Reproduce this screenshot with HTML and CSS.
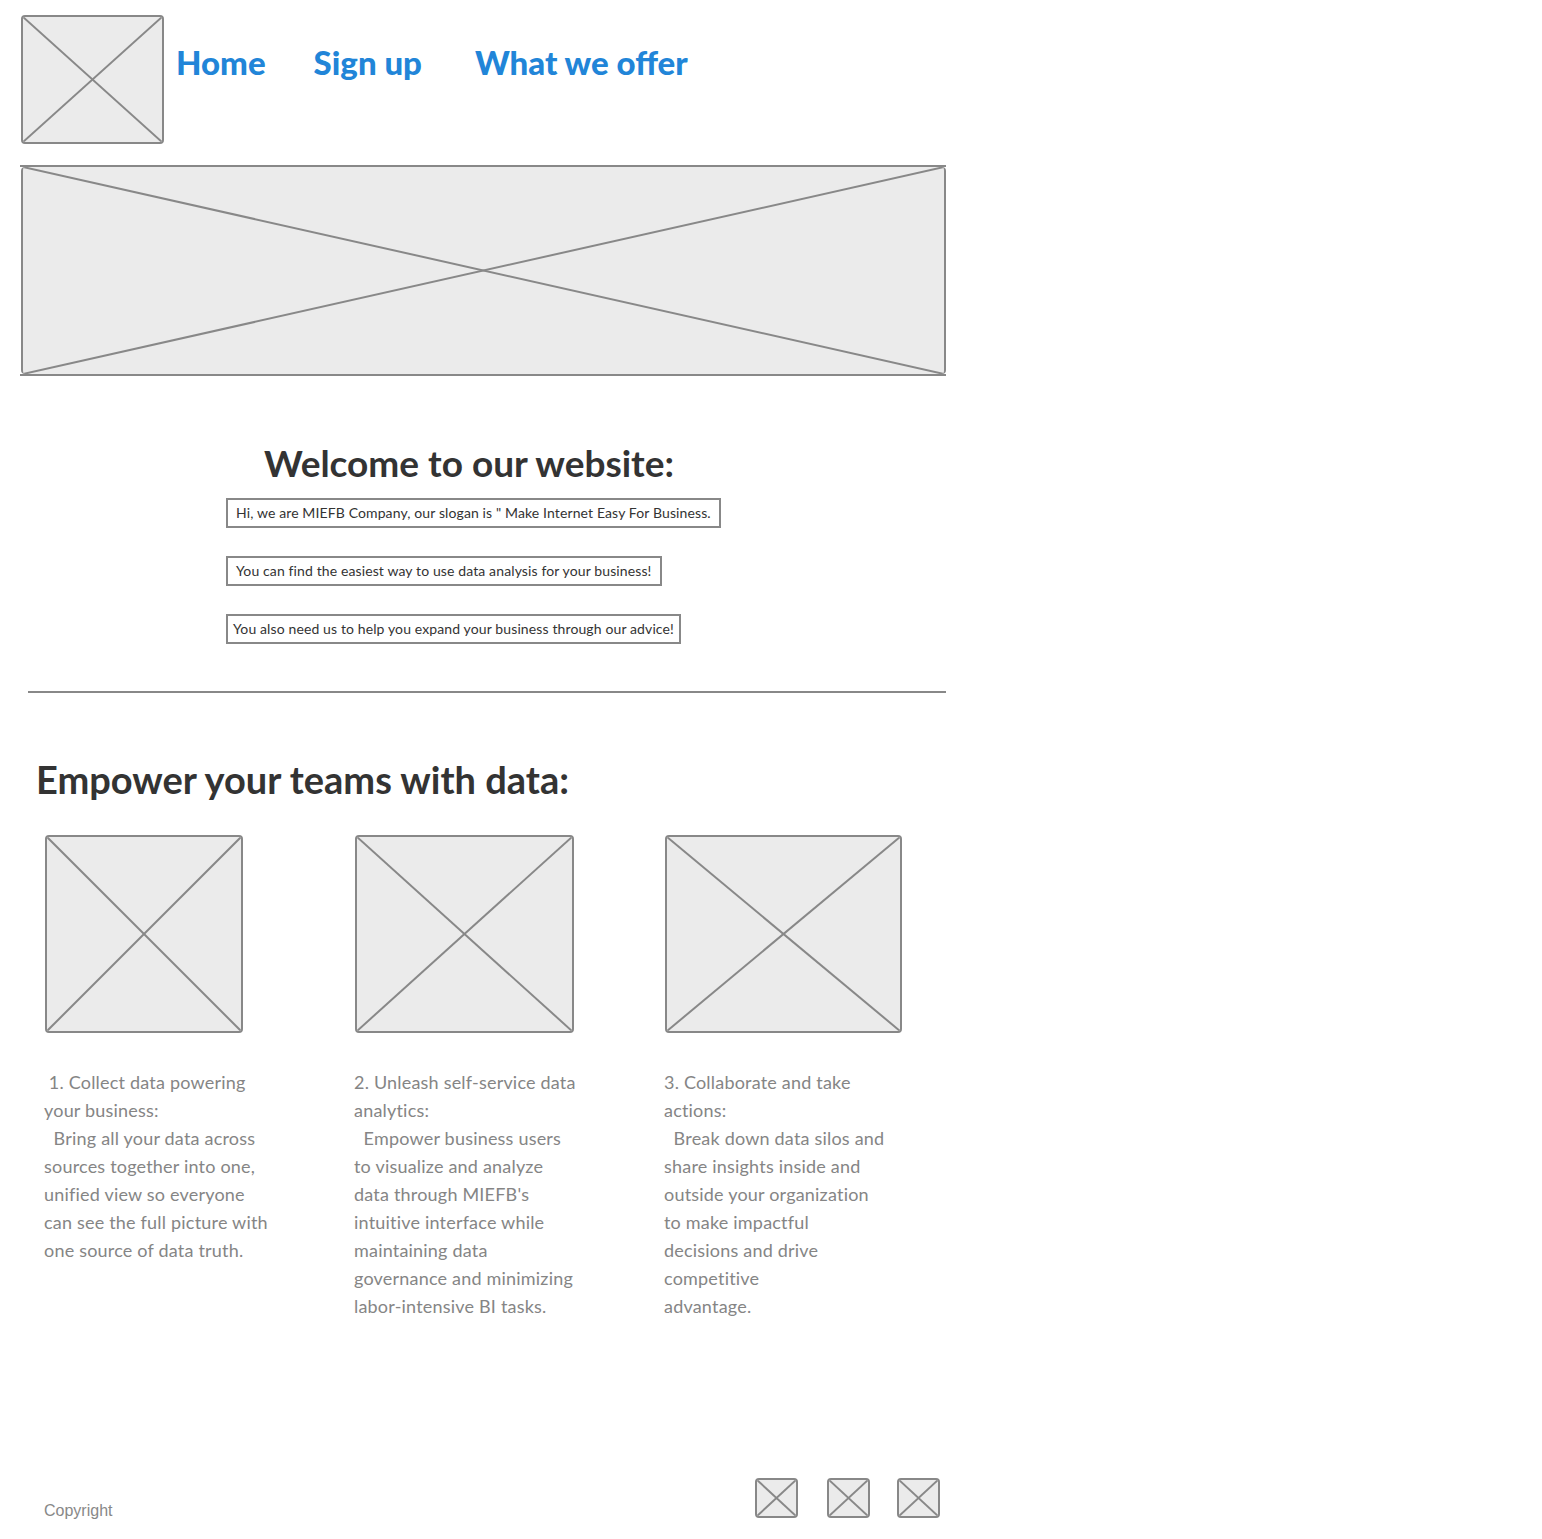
FILE: index.html
```html
<!DOCTYPE html>
<html>
<head>
<meta charset="utf-8">
<link rel="stylesheet" href="styles.css">
</head>
<body>
<div class="page">
  <header class="header">
    <div class="ph logo"><svg viewBox="0 0 100 100" preserveAspectRatio="none"><line x1="0" y1="0" x2="100" y2="100"/><line x1="100" y1="0" x2="0" y2="100"/></svg></div>
    <nav class="nav">
      <a class="nav-link home">Home</a>
      <a class="nav-link signup">Sign up</a>
      <a class="nav-link offer">What we offer</a>
    </nav>
  </header>

  <div class="hero">
    <div class="ph hero-img"><svg viewBox="0 0 100 100" preserveAspectRatio="none"><line x1="0" y1="0" x2="100" y2="100"/><line x1="100" y1="0" x2="0" y2="100"/></svg></div>
  </div>

  <section class="welcome">
    <h1 class="welcome-title">Welcome to our website:</h1>
    <div class="msg">Hi, we are MIEFB Company, our slogan is " Make Internet Easy For Business.</div>
    <div class="msg">You can find the easiest way to use data analysis for your business!</div>
    <div class="msg tight">You also need us to help you expand your business through our advice!</div>
  </section>

  <hr class="divider">

  <section class="features">
    <h2 class="features-title">Empower your teams with data:</h2>
    <div class="cols">
      <div class="col c1">
        <div class="ph feat-img"><svg viewBox="0 0 100 100" preserveAspectRatio="none"><line x1="0" y1="0" x2="100" y2="100"/><line x1="100" y1="0" x2="0" y2="100"/></svg></div>
        <p class="feat-text"> 1. Collect data powering
your business:
  Bring all your data across
sources together into one,
unified view so everyone
can see the full picture with
one source of data truth.</p>
      </div>
      <div class="col c2">
        <div class="ph feat-img"><svg viewBox="0 0 100 100" preserveAspectRatio="none"><line x1="0" y1="0" x2="100" y2="100"/><line x1="100" y1="0" x2="0" y2="100"/></svg></div>
        <p class="feat-text">2. Unleash self-service data
analytics:
  Empower business users
to visualize and analyze
data through MIEFB's
intuitive interface while
maintaining data
governance and minimizing
labor-intensive BI tasks.</p>
      </div>
      <div class="col c3">
        <div class="ph feat-img"><svg viewBox="0 0 100 100" preserveAspectRatio="none"><line x1="0" y1="0" x2="100" y2="100"/><line x1="100" y1="0" x2="0" y2="100"/></svg></div>
        <p class="feat-text">3. Collaborate and take
actions:
  Break down data silos and
share insights inside and
outside your organization
to make impactful
decisions and drive
competitive
advantage.</p>
      </div>
    </div>
  </section>

  <footer class="footer">
    <span class="copyright">Copyright</span>
    <div class="social">
      <div class="ph icon"><svg viewBox="0 0 100 100" preserveAspectRatio="none"><line x1="0" y1="0" x2="100" y2="100"/><line x1="100" y1="0" x2="0" y2="100"/></svg></div>
      <div class="ph icon gap1"><svg viewBox="0 0 100 100" preserveAspectRatio="none"><line x1="0" y1="0" x2="100" y2="100"/><line x1="100" y1="0" x2="0" y2="100"/></svg></div>
      <div class="ph icon gap2"><svg viewBox="0 0 100 100" preserveAspectRatio="none"><line x1="0" y1="0" x2="100" y2="100"/><line x1="100" y1="0" x2="0" y2="100"/></svg></div>
    </div>
  </footer>
</div>
</body>
</html>
```

FILE: styles.css
```css
* { box-sizing: border-box; }
body {
  margin: 0;
  background: #fff;
  font-family: Lato, "Liberation Sans", sans-serif;
  color: #333;
}
.page {
  width: 946px;
  padding: 15px 0 0 0;
}

/* placeholder image */
.ph {
  border: 2px solid #888;
  border-radius: 4px;
  background: #ebebeb;
  overflow: hidden;
}
.ph svg {
  display: block;
  width: 100%;
  height: 100%;
}
.ph line {
  stroke: #888;
  stroke-width: 2;
  vector-effect: non-scaling-stroke;
}

.header {
  display: flex;
  align-items: flex-start;
  padding-left: 21px;
  height: 150px;
}
.logo {
  width: 143px;
  height: 129px;
  flex: none;
}
.nav {
  display: flex;
  padding-top: 27px;
  padding-left: 12px;
}
.nav-link {
  color: #2185d8;
  font-weight: 900;
  font-size: 33px;
  line-height: 40px;
}
.signup { margin-left: 48px; }
.offer { margin-left: 53px; }

.hero {
  margin-left: 20px;
  width: 926px;
  border-top: 2px solid #888;
  border-bottom: 2px solid #888;
}
.hero-img {
  margin-left: 1px;
  width: 925px;
  height: 207px;
  border-top-width: 0;
  border-bottom-width: 0;
}

.welcome {
  padding-left: 226px;
  padding-top: 66px;
}
.welcome-title {
  margin: 0 0 14px 38px;
  font-size: 37px;
  line-height: 42px;
  font-weight: bold;
  color: #333;
}
.msg {
  display: table;
  border: 2px solid #888;
  height: 30px;
  padding: 0 8px;
  font-size: 14px;
  letter-spacing: 0.12px;
  line-height: 26px;
  color: #333;
  margin-bottom: 28px;
  white-space: nowrap;
}
.msg.tight { padding: 0 5px; margin-bottom: 0; }

.divider {
  margin: 47px 0 0 28px;
  width: 918px;
  border: 0;
  border-top: 2px solid #888;
  height: 0;
}

.features-title {
  margin: 60px 0 0 36px;
  font-size: 38px;
  line-height: 52px;
  font-weight: bold;
  color: #333;
}
.cols {
  display: flex;
  margin-top: 30px;
  padding-left: 44px;
}
.col { flex: none; }
.c1 { width: 310px; }
.c2 { width: 310px; }
.c3 { width: 260px; }
.feat-img { height: 198px; margin-left: 1px; }
.c1 .feat-img { width: 198px; }
.c2 .feat-img { width: 219px; }
.c3 .feat-img { width: 237px; }
.feat-text {
  margin: 35px 0 0 0;
  white-space: pre;
  font-size: 18px;
  letter-spacing: 0.2px;
  line-height: 28px;
  color: #858585;
}

.footer {
  display: flex;
  align-items: flex-end;
  justify-content: space-between;
  margin-top: 158px;
  padding-left: 44px;
  padding-right: 6px;
}
.copyright {
  font-family: "Liberation Sans Narrow", "Liberation Sans", sans-serif;
  font-size: 16px;
  color: #888;
  line-height: 20px;
}
.social {
  display: flex;
  margin-bottom: 3px;
}
.icon {
  width: 43px;
  height: 40px;
}
.gap1 { margin-left: 29px; }
.gap2 { margin-left: 27px; }
```
